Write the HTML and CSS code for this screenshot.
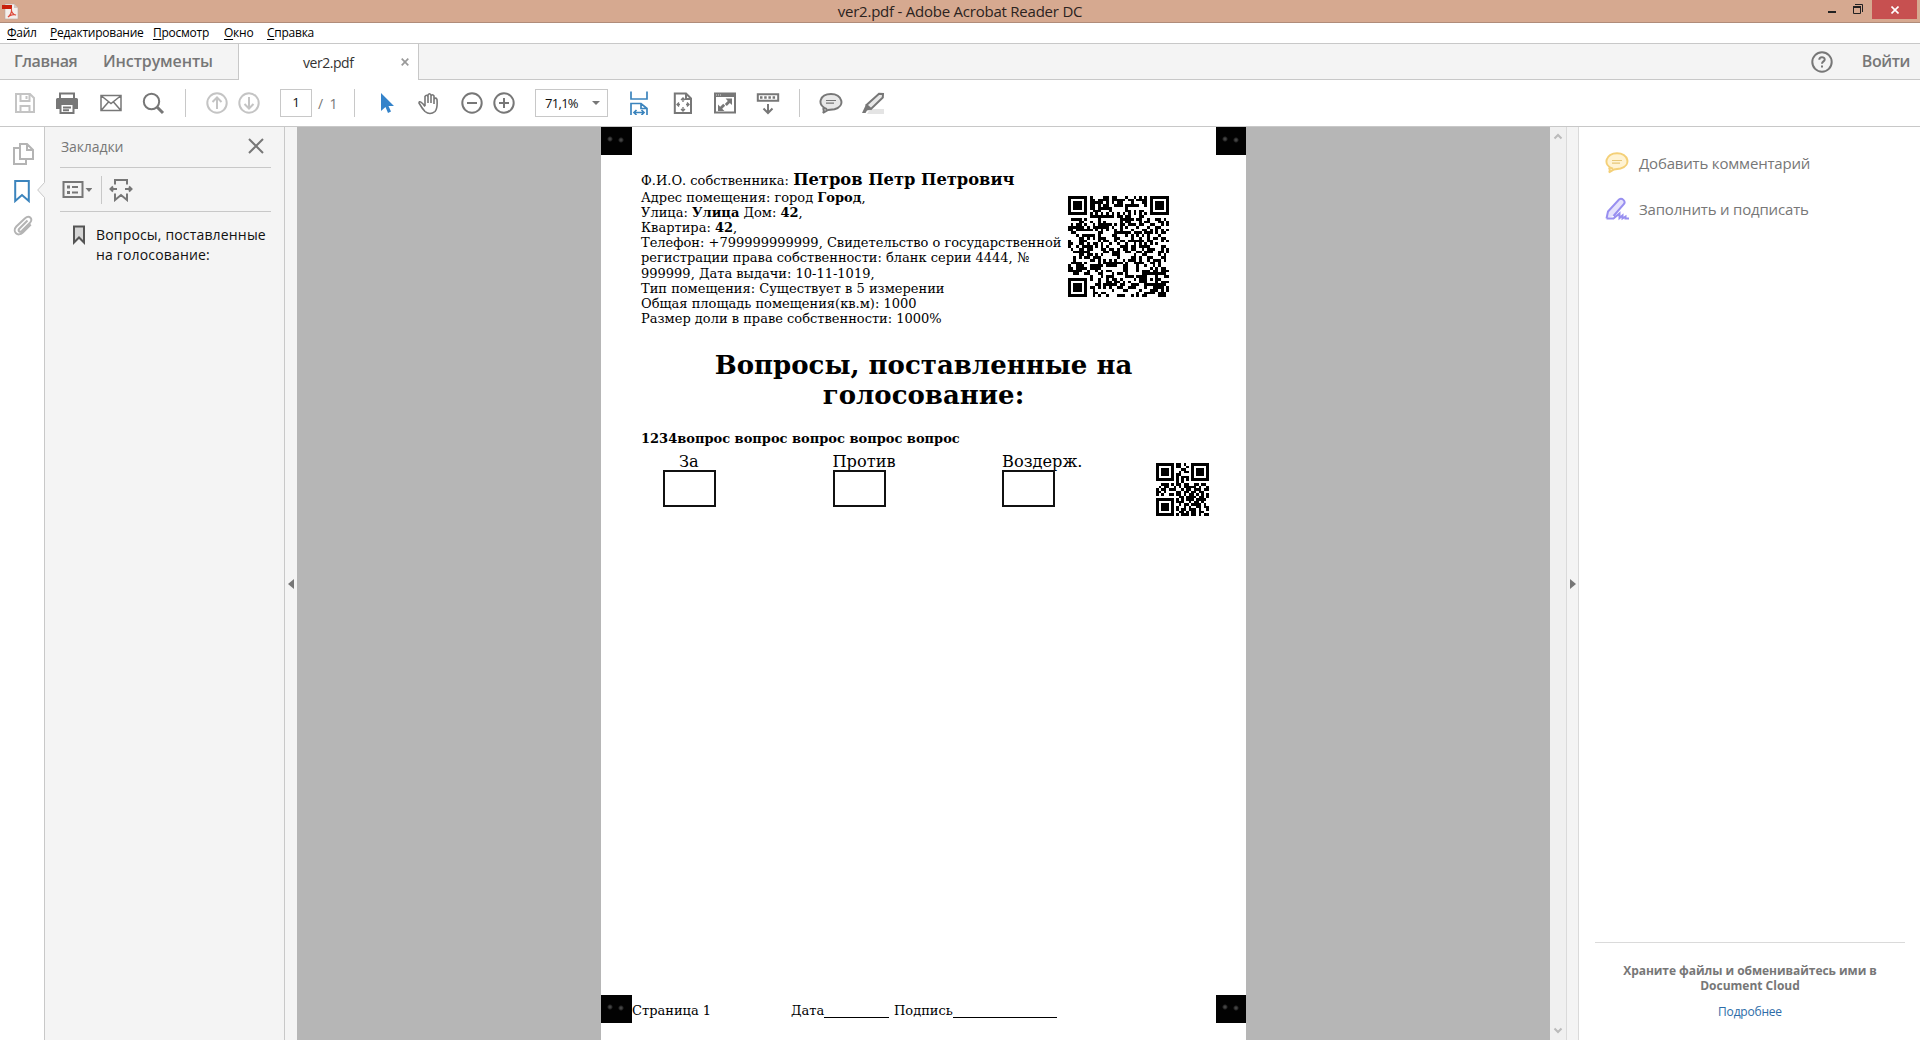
FILE: index.html
```html
<!DOCTYPE html>
<html lang="ru">
<head>
<meta charset="utf-8">
<title>ver2.pdf - Adobe Acrobat Reader DC</title>
<link rel="stylesheet" href="styles.css">
</head>
<body>
<header class="titlebar">
  <svg class="app-icon" width="17" height="17" viewBox="0 0 17 17"><path d="M3 1h9l4 4v11H3z" fill="#f4efec" stroke="#b9aaa2" stroke-width=".6"/><path d="M12 1v4h4z" fill="#d2c7c2"/><path d="M0 2h10v4H0z" fill="#c9200c"/><path d="M6 14c2-1 4-5 3.500-7.500C9 8 11 12 14 12c-2-1-6 0-8 2" fill="none" stroke="#dd4a3c" stroke-width="1.200"/></svg>
  <span class="window-title">ver2.pdf - Adobe Acrobat Reader DC</span>
  <div class="controls">
    <svg width="8" height="23" viewBox="0 0 8 23"><path d="M0 11h8v2H0z" fill="#222"/></svg>
    <svg width="10" height="23" viewBox="0 0 10 23"><path d="M2 4.500h7.500V12M.5 7h7v6.500h-7z" fill="none" stroke="#222"/><path d="M0 6h8v2H0z" fill="#222"/></svg>
    <div class="close"><svg width="8" height="8" viewBox="0 0 8 8"><path d="M.5.5l7 7M7.500.5l-7 7" stroke="#fff" stroke-width="1.600"/></svg></div>
  </div>
</header>
<nav class="menu"><span class="m1"><u>Ф</u>айл</span><span class="m2"><u>Р</u>едактирование</span><span class="m3"><u>П</u>росмотр</span><span class="m4"><u>О</u>кно</span><span class="m5"><u>С</u>правка</span></nav>
<div class="tabs">
  <div class="home"><b class="t1">Главная</b><b class="t2">Инструменты</b></div>
  <div class="tab"><span>ver2.pdf</span><svg width="8" height="8" viewBox="0 0 8 8"><path d="M.7.7l6.600 6.600M7.300.7L.7 7.300" stroke="#999" stroke-width="1.700"/></svg></div>
  <div class="account"><svg width="22" height="22" viewBox="0 0 22 22"><circle cx="11" cy="11" r="9.700" class="s2"/><path d="M8.300 8.700c0-3.300 5.400-3.200 5.400-.2 0 2-2.700 1.800-2.700 4.300M11 14.500v2" class="s2"/></svg><b>Войти</b></div>
</div>
<div class="toolbar">
  <svg class="icon pale" viewBox="0 0 24 24"><path d="M3 3h14l4 4v14H3zM7.500 3v7h9V3M7.500 21v-6h9v6M13.500 5v3"/></svg>
  <svg class="icon near" viewBox="0 0 24 24"><path d="M5 8V2.500h14V8" /><path d="M1 8.500q0-1.500 1.500-1.500h19q1.500 0 1.500 1.500V18h-4v-4H5v4H1z" fill="#777" stroke="none"/><path d="M5.500 13v9h13v-9zM8 16.500h8M8 19.200h6"/></svg>
  <svg class="icon wide" viewBox="0 0 24 24"><path d="M2 4.500h20v15H2zM2.500 5l9.500 7.500L21.500 5M2.500 19l7-8M21.500 19l-7-8" stroke-width="1.500"/></svg>
  <svg class="icon near" viewBox="0 0 24 24"><circle cx="10.500" cy="10.500" r="7.700"/><path d="M16 16l6 6" stroke-width="3"/></svg>
  <i class="sep first-sep"></i>
  <svg class="icon pale" viewBox="0 0 24 24"><circle cx="12" cy="12" r="9.700"/><path d="M12 18V7M7.500 11L12 6.500l4.500 4.500"/></svg>
  <svg class="icon pale tight" viewBox="0 0 24 24"><circle cx="12" cy="12" r="9.700"/><path d="M12 6v11M7.500 13l4.500 4.500 4.500-4.500"/></svg>
  <div class="page-box">1</div>
  <div class="total">/&nbsp; 1</div>
  <i class="sep total-sep"></i>
  <svg class="icon cursor" viewBox="0 0 24 24"><path d="M6 2v18l4.500-4 2.500 6 3-1.500-2.500-5.500H19z" fill="#3483ca" stroke="none"/></svg>
  <svg class="icon near" viewBox="0 0 24 24"><path d="M8 15V5.500q1.500-2.500 3 0V12M11 11V4q1.500-2.500 3 0v8M14 12V5q1.500-2.500 3 0v8M17 12V8q2-2 3 .5c.5 6 .5 9-2 12q-5 4-10 0c-2-2-4-5-6-8.500 0-2.500 3-1 6 3.500" stroke-width="1.600"/></svg>
  <svg class="icon" viewBox="0 0 24 24"><circle cx="12" cy="12" r="9.700"/><path d="M7 12h10"/></svg>
  <svg class="icon tight" viewBox="0 0 24 24"><circle cx="12" cy="12" r="9.700"/><path d="M7 12h10M12 7v10"/></svg>
  <div class="zoom-box"><span>71,1%</span><i class="down"></i></div>
  <svg class="icon blue" viewBox="0 0 24 24"><path d="M4 .5V8h16V.5M4 24V12.500h10l6 5V24M14 12.500v5h6M7 21.500h10M9.500 19L7 21.500 9.500 24M14.500 19l2.500 2.500-2.500 2.500" stroke-width="1.700"/></svg>
  <svg class="icon wide" viewBox="0 0 24 24"><path d="M3.800 2.500H15l5 5V22H3.800zM15 2.500V8h5"/><path d="M12 7v4M10 9l2-2 2 2M12 20v-4M10 18l2 2 2-2M6 13.500h3M8 11.500l-2 2 2 2M18 13.500h-3M16 11.500l2 2-2 2" stroke-width="1.300"/></svg>
  <svg class="icon near" viewBox="0 0 24 24"><path d="M2 2.500h20v19H2z"/><path d="M1 2h22v4H1z" fill="#777" stroke="none"/><path d="M3 4h1m1 0h1m1 0h1" stroke="#ddd" stroke-width="1"/><path d="M19 7.500v6.500l-2.200-2-3 3-2-2 3-3-2.200-2.500zM5 20v-6.500l2.200 2.200 3-3 2 2-3 3 2.200 2.300z" fill="#777" stroke="none"/></svg>
  <svg class="icon" viewBox="0 0 24 24"><path d="M1.800 3.200h20.400v6.600H1.800z"/><path d="M4 6.500h16" stroke-dasharray="2.500 1.700" stroke-width="2.500"/><path d="M12 13v8.500M7.500 17.500L12 22l4.500-4.500"/></svg>
  <i class="sep"></i>
  <svg class="icon" viewBox="0 0 24 24"><path d="M8 18.300C-3 14 1 3 12 3s15 12 3.500 15.300L9 19l-5 3c1.500-2 1-3 0-5" fill="#e8e8e8"/><path d="M7 9.500h10M7 12.200h8" stroke-width="1.200"/></svg>
  <svg class="icon near" viewBox="0 0 24 24"><path d="M9 18h14v5H6z" fill="#e4e4e4" stroke="none"/><path d="M5.500 14L18 2.700l4 .3-.2 3.500L10 18z" fill="#e8e8e8"/><path d="M5 13.500l5.500 5L6 19.500 4.500 22H1z" fill="#777" stroke="none"/></svg>
</div>
<main class="workspace">
  <aside class="rail">
    <svg width="24" height="24" viewBox="0 0 24 24"><path d="M9 2h7l6 6v9H9zM16 2v6h6M9 6H3v16h12v-5" class="rail-line"/></svg>
    <svg width="24" height="24" viewBox="0 0 24 24"><path d="M4.200 2h13.600v20l-6.800-6-6.800 6z" class="active"/></svg>
    <svg class="clip" width="24" height="24" viewBox="0 0 24 24"><path d="M16.500 6.500l-8 8c-2 2 0 4.500 2.300 2.500l8-8c4-4-.5-8.500-5-4.500l-8.500 8c-4.500 5 1.500 11 6.500 6l8-8" class="rail-line"/></svg>
    <svg class="notch" width="8" height="16" viewBox="0 0 8 16"><path d="M8 0v16L.5 8z" fill="#f4f4f4"/><path d="M7.500.5L.7 8l6.800 7.500" fill="none" stroke="#c8c8c8"/></svg>
  </aside>
  <aside class="bookmarks">
    <div class="panel-head"><span>Закладки</span><svg width="16" height="16" viewBox="0 0 16 16"><path d="M1 1l14 14M15 1L1 15" class="s2"/></svg></div>
    <div class="panel-tools">
      <svg width="30" height="20" viewBox="0 0 30 20"><path d="M1.500 2h19v15h-19zM10 7h6M10 12.500h6" class="s2"/><path d="M5 5.500h3v3H5zM5 11h3v3H5zM23.500 8h7l-3.500 4z" fill="#777"/></svg>
      <i class="tool-sep"></i>
      <svg width="24" height="24" viewBox="0 0 24 24"><path d="M6 6.500V2h12v4.500M6 15.500V22l6-5 6 5v-6.500M8 11H1.500M16 11h6.500M4 8.500L1.500 11 4 13.500M20 8.500l2.500 2.500-2.500 2.500" class="s2"/></svg>
    </div>
    <div class="entry"><svg width="14" height="20" viewBox="0 0 14 20"><path d="M2 1.500h10v16l-5-5-5 5z" fill="#d5d5d5" stroke="#555" stroke-width="2"/></svg><p>Вопросы, поставленные<br><span>на голосование:</span></p></div>
  </aside>
  <div class="splitter"><i class="arrow-left"></i></div>
  <section class="canvas">
    <article class="page">
      <div class="marks"><i class="mark"></i><i class="mark last"></i></div>
      <div class="owner">
        <p class="owner-text"><span class="name-line">Ф.И.О. собственника: <b>Петров Петр Петрович</b></span>Адрес помещения: город <b>Город</b>,<br>Улица: <b>Улица</b> Дом: <b>42</b>,<br>Квартира: <b>42</b>,<br>Телефон: +799999999999, Свидетельство о государственной<br>регистрации права собственности: бланк серии 4444, №<br>999999, Дата выдачи: 10-11-1019,<br>Тип помещения: Существует в 5 измерении<br>Общая площадь помещения(кв.м): 1000<br>Размер доли в праве собственности: 1000%</p>
        <svg class="qr-large" id="owner-code" viewBox="0 0 37 37" shape-rendering="crispEdges"></svg>
      </div>
      <h1>Вопросы, поставленные на<br>голосование:</h1>
      <p class="question">1234вопрос вопрос вопрос вопрос вопрос</p>
      <div class="answers">
        <div class="answer for"><span>За</span><i></i></div>
        <div class="answer"><span>Против</span><i></i></div>
        <div class="answer"><span>Воздерж.</span><i></i></div>
        <svg class="qr-small" id="vote-code" viewBox="0 0 21 21" shape-rendering="crispEdges"></svg>
      </div>
      <footer class="page-foot"><i class="mark"></i><span class="num">Страница 1</span><span class="date">Дата</span><i class="blank b1"></i><span class="sign">Подпись</span><i class="blank b2"></i><i class="mark last"></i></footer>
    </article>
  </section>
  <div class="scroll">
    <svg width="10" height="8" viewBox="0 0 10 8"><path d="M1.500 6.500L5 3l3.500 3.500" /></svg>
    <svg width="10" height="8" viewBox="0 0 10 8"><path d="M1.500 1.500L5 5l3.500-3.500" /></svg>
  </div>
  <div class="splitter right"><i class="arrow-right"></i></div>
  <aside class="tools">
    <div class="tool comment"><svg width="24" height="24" viewBox="0 0 24 24"><path d="M8 17.800C-3 14 1 2.200 12 2.200s15 12 3.500 15.300L9 18.500l-5 3c1.500-2 1-3 0-5" fill="#fff3d3" stroke="#f4d078" stroke-width="2"/><path d="M7 9.500h10M7 12.200h8" stroke="#e8c878" stroke-width="1.200"/></svg><span>Добавить комментарий</span></div>
    <div class="tool fill"><svg width="24" height="24" viewBox="0 0 24 24"><path d="M1.500 21.500L3 14.500 14 2.500c3-2 7 1.500 5 4.500L8.500 19z" fill="#e5e2fc"/><path d="M1.500 21.500L3 14.500 14 2.500c3-2 7 1.500 5 4.500L8.500 19M1.500 21.500h7l6-5v4.500l3-2.500v3l3-2v2H24" fill="none" stroke="#988ff0" stroke-width="2"/></svg><span>Заполнить и подписать</span></div>
    <div class="cloud"><b class="c1">Храните файлы и обменивайтесь ими в</b><b class="c2">Document Cloud</b><a>Подробнее</a></div>
  </aside>
</main>
<script src="codes.js"></script>
</body>
</html>
```
FILE: styles.css
```css
* { box-sizing: border-box; }
body { margin: 0; width: 1920px; height: 1040px; overflow: hidden; background: #fff; color: #111; font-family: "Open Sans", "Noto Sans", sans-serif; display: flex; flex-direction: column; }
svg { display: block; flex: none; }
p, h1 { margin: 0; }
span, b, a { white-space: nowrap; }
.s2 { fill: none; stroke: #777; stroke-width: 2; }

.titlebar { height: 23px; background: #d6a990; border-bottom: 1px solid #b08c7a; display: grid; grid-template-columns: 1fr auto 1fr; align-items: center; }
.app-icon { margin-left: 2px; }
.window-title { font-size: 15px; line-height: 22px; letter-spacing: -.23px; color: #2b2320; }
.controls { justify-self: end; height: 22px; display: flex; align-items: flex-start; padding-right: 3px; }
.controls > svg + svg { margin-left: 17px; }
.close { width: 45px; height: 19px; margin-left: 9px; background: #c75050; display: grid; place-items: center; }

.menu { height: 20px; display: flex; padding-left: 7px; font-size: 12px; line-height: 20px; color: #000; }
.menu span { flex: none; letter-spacing: -.25px; }
.menu u { text-underline-offset: 2px; }
.m1 { width: 43px; } .m2 { width: 103px; } .m3 { width: 71px; } .m4 { width: 43px; }

.tabs { height: 37px; border-top: 1px solid #c8c8c8; display: flex; background: #f4f4f4; color: #777; font-size: 16px; }
.home { width: 239px; border-right: 1px solid #c8c8c8; border-bottom: 1px solid #c8c8c8; display: flex; padding-left: 14px; line-height: 35px; }
.t1 { width: 89px; letter-spacing: -.4px; }
.t2 { letter-spacing: -.1px; }
.home b, .account b { font-weight: 600; }
.tab { width: 179px; background: #fff; display: flex; align-items: center; padding: 0 9px 0 64px; justify-content: space-between; font-size: 14px; letter-spacing: -.45px; color: #333; }
.account { flex: 1; border-left: 1px solid #c8c8c8; border-bottom: 1px solid #c8c8c8; display: flex; align-items: center; justify-content: flex-end; gap: 29px; padding-right: 10px; }
.account b { letter-spacing: -.4px; line-height: 20px; padding-bottom: 2px; }

.toolbar { height: 47px; border-bottom: 1px solid #c8c8c8; display: flex; align-items: center; padding-left: 13px; gap: 19px; }
.icon { width: 24px; height: 24px; fill: none; stroke: #777; stroke-width: 2; }
.pale { stroke: #c4c4c4; }
.blue { stroke: #3b84bd; }
.near { margin-left: -1px; } .wide { margin-left: 1px; } .tight { margin-left: -11px; } .cursor { margin-left: 1px; }
.sep { flex: none; width: 1px; height: 28px; background: #c8c8c8; }
.first-sep { margin-left: 1px; }
.page-box { width: 32px; height: 28px; border: 1px solid #c8c8c8; text-align: center; font-size: 13.500px; line-height: 25px; }
.total { width: 20px; margin-left: -13px; color: #777; font-size: 14px; letter-spacing: -.3px; white-space: nowrap; }
.total-sep { margin-left: -3px; }
.zoom-box { width: 73px; height: 28px; border: 1px solid #c8c8c8; display: flex; align-items: center; justify-content: space-between; padding: 0 7px 0 9px; font-size: 13px; letter-spacing: -.7px; }
.down { border: 4px solid transparent; border-top-color: #777; border-bottom: 0; }

.workspace { height: 913px; display: flex; }
.rail { position: relative; width: 45px; border-right: 1px solid #c8c8c8; display: flex; flex-direction: column; gap: 13px; padding: 15px 0 0 11px; }
.rail-line { fill: none; stroke: #b4b4b4; stroke-width: 2; }
.clip { margin-top: -2px; }
.active { fill: none; stroke: #3b84bd; stroke-width: 2; }
.notch { position: absolute; left: 37px; top: 55px; }
.bookmarks { width: 240px; background: #f4f4f4; border-right: 1px solid #c8c8c8; padding: 0 13px 0 15px; }
.panel-head { height: 41px; border-bottom: 1px solid #c8c8c8; display: flex; align-items: center; justify-content: space-between; padding: 0 7px 2px 1px; color: #777; font-size: 14px; }
.panel-head span { letter-spacing: -.1px; }
.panel-tools { height: 44px; border-bottom: 1px solid #c8c8c8; display: flex; align-items: center; padding-left: 2px; }
.tool-sep { width: 1px; height: 28px; background: #c8c8c8; margin: 0 7px 0 9px; }
.entry { display: flex; padding: 13px 0 0 12px; gap: 10px; font-size: 14px; letter-spacing: .17px; line-height: 20px; color: #111; }
.entry p { white-space: nowrap; }
.splitter { width: 12px; background: #f4f4f4; display: flex; align-items: center; justify-content: center; }
.arrow-left { border: 5px solid transparent; border-right: 6px solid #777; border-left: 0; }
.arrow-right { border: 5px solid transparent; border-left: 6px solid #777; border-right: 0; }
.canvas { width: 1253px; background: #b6b6b6; padding-left: 304px; }
.page { width: 645px; height: 913px; background: #fff; color: #000; font-family: "DejaVu Serif", serif; font-size: 13px; display: flex; flex-direction: column; }
.marks { display: flex; justify-content: space-between; }
.mark { flex: none; width: 31px; height: 28px; background: radial-gradient(circle at 9px 12px, #444 1px, transparent 3px), radial-gradient(circle at 20px 13px, #444 1px, transparent 3px), #020202; }
.owner { display: flex; height: 182px; padding-left: 40px; }
.owner-text { width: 427px; padding-top: 15px; line-height: 15.200px; white-space: nowrap; }
.name-line { display: block; height: 19.500px; line-height: 19px; }
.name-line b { font-size: 16.300px; }
.qr-large { width: 101px; height: 101px; margin-top: 41px; }
h1 { margin-top: 13px; font-size: 26px; line-height: 30.200px; text-align: center; }
.question { margin: 20.500px 0 0 40px; font-weight: bold; line-height: 16px; }
.answers { display: flex; height: 64px; padding: 6px 0 0 62px; }
.answer { width: 169.500px; display: flex; flex-direction: column; font-size: 16.200px; line-height: 17.500px; }
.for span { padding-left: 16px; }
.answer i { width: 53px; height: 37px; margin-top: -.5px; border: 2px solid #111; }
.qr-small { width: 53px; height: 53px; margin: 10px 0 0 -16px; }
.page-foot { margin-top: auto; margin-bottom: 17px; display: flex; height: 28px; line-height: 31px; font-size: 13px; }
.num { width: 159px; } .date { width: 33px; } .sign { width: 59px; }
.blank { height: 1px; background: #000; margin-top: 22px; }
.b1 { width: 65px; margin-right: 5px; } .b2 { width: 104px; }
.last { width: 30px; margin-left: auto; }
.scroll { width: 17px; background: #f0f0f0; border-right: 1px solid #dadada; display: flex; flex-direction: column; align-items: center; justify-content: space-between; padding: 5px 0; }
.scroll path { fill: none; stroke: #bbb; stroke-width: 2; }
.splitter.right { width: 12px; border-right: 1px solid #dadada; }
.tools { width: 341px; padding: 24px 0 0 26px; display: flex; flex-direction: column; color: #777; }
.tool { display: flex; align-items: center; height: 24px; gap: 10px; font-size: 15px; letter-spacing: -.18px; }
.tool span { padding-bottom: 1px; }
.fill { margin-top: 22px; }
.cloud { margin: auto 15px 18px -10px; height: 79px; width: 310px; border-top: 1px solid #dadada; box-sizing: content-box; display: flex; flex-direction: column; align-items: center; font-size: 12px; line-height: 15px; }
.c1 { margin-top: 20px; letter-spacing: -.05px; }
.cloud a { margin-top: 11px; letter-spacing: -.2px; color: #2d6da8; }
```
FILE: codes.js
```js
// Draws the square codes: three finder patterns, timing lines and data modules.
function drawCode(id, size, seed, known) {
  const grid = [];
  for (let y = 0; y < size; y++) {
    grid.push([]);
    for (let x = 0; x < size; x++) {
      seed = (Math.imul(seed, 1103515245) + 12345) >>> 0;
      grid[y].push(((seed >>> 16) & 1) === 1);
    }
  }
  if (known) known.forEach(([x, y, row]) => [...row].forEach((c, i) => { grid[y][x + i] = c === '#'; }));
  for (let i = 8; i < size - 8; i++) grid[6][i] = grid[i][6] = i % 2 === 0;
  const ring = (cx, cy, reach, light) => {
    for (let dy = -reach; dy <= reach; dy++) for (let dx = -reach; dx <= reach; dx++) {
      const x = cx + dx, y = cy + dy;
      if (x < 0 || y < 0 || x >= size || y >= size) continue;
      grid[y][x] = !light.includes(Math.max(Math.abs(dx), Math.abs(dy)));
    }
  };
  ring(3, 3, 4, [2, 4]);
  ring(size - 4, 3, 4, [2, 4]);
  ring(3, size - 4, 4, [2, 4]);
  if (size > 21) ring(size - 7, size - 7, 2, [1]);
  let d = '';
  grid.forEach((row, y) => row.forEach((on, x) => { if (on) d += `M${x} ${y}h1v1h-1z`; }));
  const path = document.createElementNS('http://www.w3.org/2000/svg', 'path');
  path.setAttribute('d', d);
  document.getElementById(id).append(path);
}
drawCode('owner-code', 37, 77, null);
drawCode('vote-code', 21, 19, [
  [8, 0, '##_#_'], [8, 1, '##__#'], [8, 2, '__##_'], [8, 3, '_#_##'], [8, 4, '##___'], [8, 5, '#_###'], [8, 7, '#_#__'],
  [0, 8, '__###_#_##_##__##_##_'], [0, 9, '_#_##__#_#_#####_#__#'], [0, 10, '#_##_###__#_##_###_##'],
  [0, 11, '##_#____##_##_##_##__'], [0, 12, '#_#__##_##_#_##_#_#_#'],
  [8, 13, '_##_####_##_#'], [8, 14, '#_#_###_####_'], [8, 15, '###__#_##_#__'], [8, 16, '_#_##_####_#_'],
  [8, 17, '#__#_#__##_##'], [8, 18, '#_##_###_#__#'], [8, 19, '_##_#_##_##__'], [8, 20, '#_###_##_#_##']
]);
```
